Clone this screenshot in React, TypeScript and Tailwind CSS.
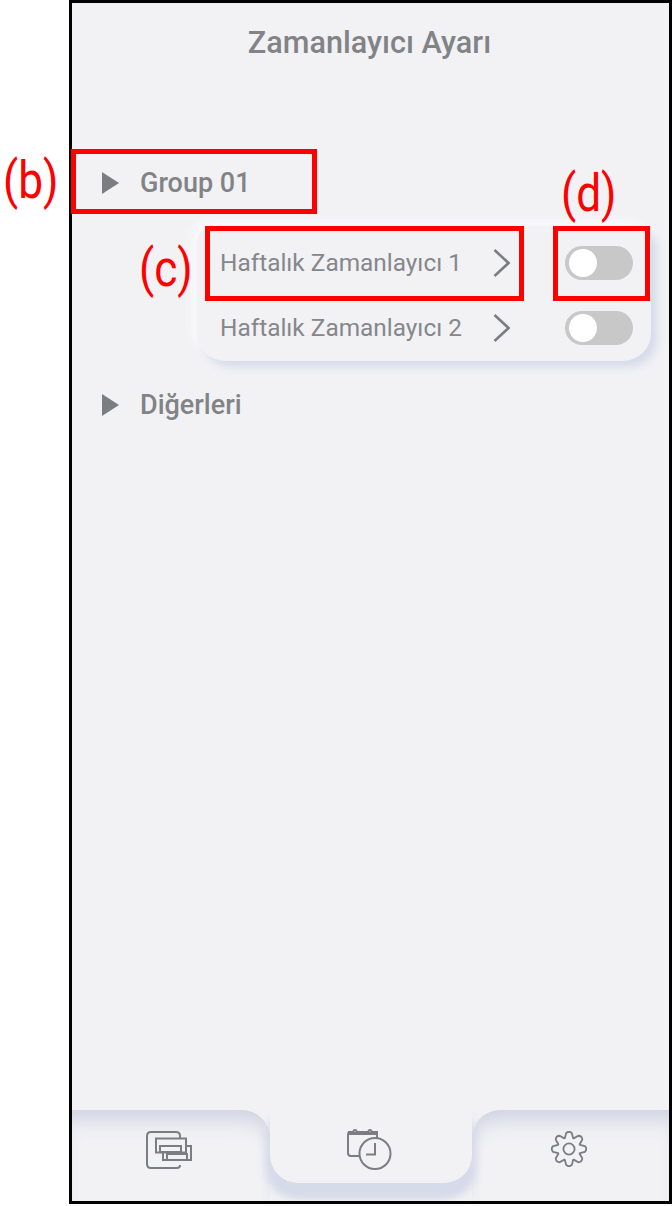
const font = "font-['Roboto',sans-serif]";

const timers = ["Haftalık Zamanlayıcı 1", "Haftalık Zamanlayıcı 2"];

// 8 rounded teeth round the centre of a 36x36 box
const gearPath = Array.from({ length: 8 }, (_, i) => {
  const a = (i * Math.PI) / 4 - Math.PI / 2;
  const pt = (r: number, d: number) => {
    const t = a + (d * Math.PI) / 180;
    return `${(18 + r * Math.cos(t)).toFixed(2)} ${(18 + r * Math.sin(t)).toFixed(2)}`;
  };
  return `${i === 0 ? "M" : "L"}${pt(11.6, -21)} L${pt(16.2, -10)} Q${pt(18.6, 0)} ${pt(16.2, 10)} L${pt(11.6, 21)}`;
}).join(" ") + " Z";

function Toggle() {
  return (
    <div className="flex h-[34px] w-[68px] items-center rounded-full bg-[#c8c8c8] pl-[4px]">
      <div className="h-[28px] w-[28px] rounded-full bg-white" />
    </div>
  );
}

function GroupRow({ label }: { label: string }) {
  return (
    <div className="flex h-[30px] items-center pl-[30px]">
      <svg width="17" height="22" viewBox="0 0 17 22" className="text-[#7b7e80]">
        <path d="M0 0 L17 11 L0 22 Z" fill="currentColor" />
      </svg>
      <span className="ml-[21px] text-[27px] font-medium text-[#818386]">{label}</span>
    </div>
  );
}

function TimerCard() {
  return (
    <div className="ml-[125px] mr-[18px] mt-[28px] flex h-[135px] flex-col rounded-b-[28px] rounded-t-[16px] bg-[#f2f2f5] pt-[4px] shadow-[6px_6px_9px_#d6dbea,-5px_-5px_9px_#fafafc]">
      {timers.map((name) => (
        <div key={name} className="flex h-[66px] items-center pl-[23px] pr-[18px]">
          <span className="w-[273px] pt-[1px] text-[24.4px] text-[#85878a]">{name}</span>
          <svg width="17" height="28" viewBox="0 0 17 28" fill="none" stroke="#7b7e80" strokeWidth="2.6">
            <path d="M1.5 1 L15.5 14 L1.5 27" />
          </svg>
          <div className="ml-auto">
            <Toggle />
          </div>
        </div>
      ))}
    </div>
  );
}

function TabBar() {
  return (
    <div className="flex h-[91px]">
      <div className="flex h-full w-[198px] justify-center rounded-tr-[28px] pt-[21px] shadow-[inset_0_20px_20px_-10px_#cfd3e2]">
        <svg width="46" height="38" viewBox="0 0 46 38" fill="none" stroke="#7b7e80" strokeWidth="2" className="mr-[4px]">
          <path d="M34 34 Q34 37 31 37 H5 Q1 37 1 33 V5 Q1 1 5 1 H30 Q34 1 34 5 V7" />
          <rect x="10" y="7.5" width="30" height="14" />
          <rect x="14" y="15" width="21" height="6" />
          <path d="M40 15 H45 V29 H17 V21" />
          <rect x="21" y="23" width="20" height="6" />
        </svg>
      </div>
      <div className="relative z-10 flex h-[73px] w-[202px] justify-center rounded-b-[28px] bg-[#f2f2f5] pt-[19px] shadow-[0_8px_9px_#d6dbea,-6px_16px_10px_-2px_#d6dae8,6px_16px_10px_-2px_#d6dae8]">
        <svg width="46" height="41" viewBox="0 0 46 41" fill="none" stroke="#7b7e80" strokeWidth="2" className="mr-[3px]">
          <path d="M13 27 H4 Q1 27 1 24 V5 Q1 3 4 3 H30 V10" />
          <path d="M2 3 H30 V5 H2 Z" fill="#7b7e80" />
          <circle cx="8" cy="2.5" r="1.5" fill="#f2f2f5" />
          <circle cx="23" cy="2.5" r="1.5" fill="#f2f2f5" />
          <circle cx="28" cy="24.5" r="15.5" />
          <path d="M28 14 V25.5 H19" />
        </svg>
      </div>
      <div className="flex h-full flex-1 justify-center rounded-tl-[28px] pt-[21px] shadow-[inset_0_20px_20px_-10px_#cfd3e2]">
        <svg width="36" height="36" viewBox="0 0 36 36" fill="none" stroke="#7b7e80" strokeWidth="1.8" strokeLinejoin="round" className="mr-[3px]">
          <path d={gearPath} />
          <circle cx="18" cy="18" r="5.6" />
        </svg>
      </div>
    </div>
  );
}

function Callout({ className }: { className: string }) {
  return <div className={`absolute border-[5px] border-[#ff0000] ${className}`} />;
}

function Tag({ text, className }: { text: string; className: string }) {
  return (
    <span className={`absolute origin-left scale-x-[0.85] text-[52px] leading-none text-[#ff0000] ${className}`}>
      {text}
    </span>
  );
}

export default function App() {
  return (
    <div className={`relative h-[1206px] w-[672px] bg-white pb-[2px] pl-[69px] ${font}`}>
      <div className="flex h-full flex-col overflow-hidden border-[3px] border-black bg-[#f2f2f5]">
        <h1 className="pr-[2px] pt-[21px] text-center text-[30.6px] font-medium leading-[38px] text-[#818386]">
          Zamanlayıcı Ayarı
        </h1>
        <div className="mt-[106px] flex-1">
          <GroupRow label="Group 01" />
          <TimerCard />
          <div className="mt-[29px]">
            <GroupRow label="Diğerleri" />
          </div>
        </div>
        <TabBar />
      </div>

      <Callout className="left-[71px] top-[149px] h-[65px] w-[246px]" />
      <Callout className="left-[205px] top-[226px] h-[75px] w-[319px]" />
      <Callout className="left-[553px] top-[226px] h-[75px] w-[97px]" />
      <Tag text="(b)" className="left-[3px] top-[155px]" />
      <Tag text="(c)" className="left-[139px] top-[243px]" />
      <Tag text="(d)" className="left-[561px] top-[168px]" />
    </div>
  );
}
